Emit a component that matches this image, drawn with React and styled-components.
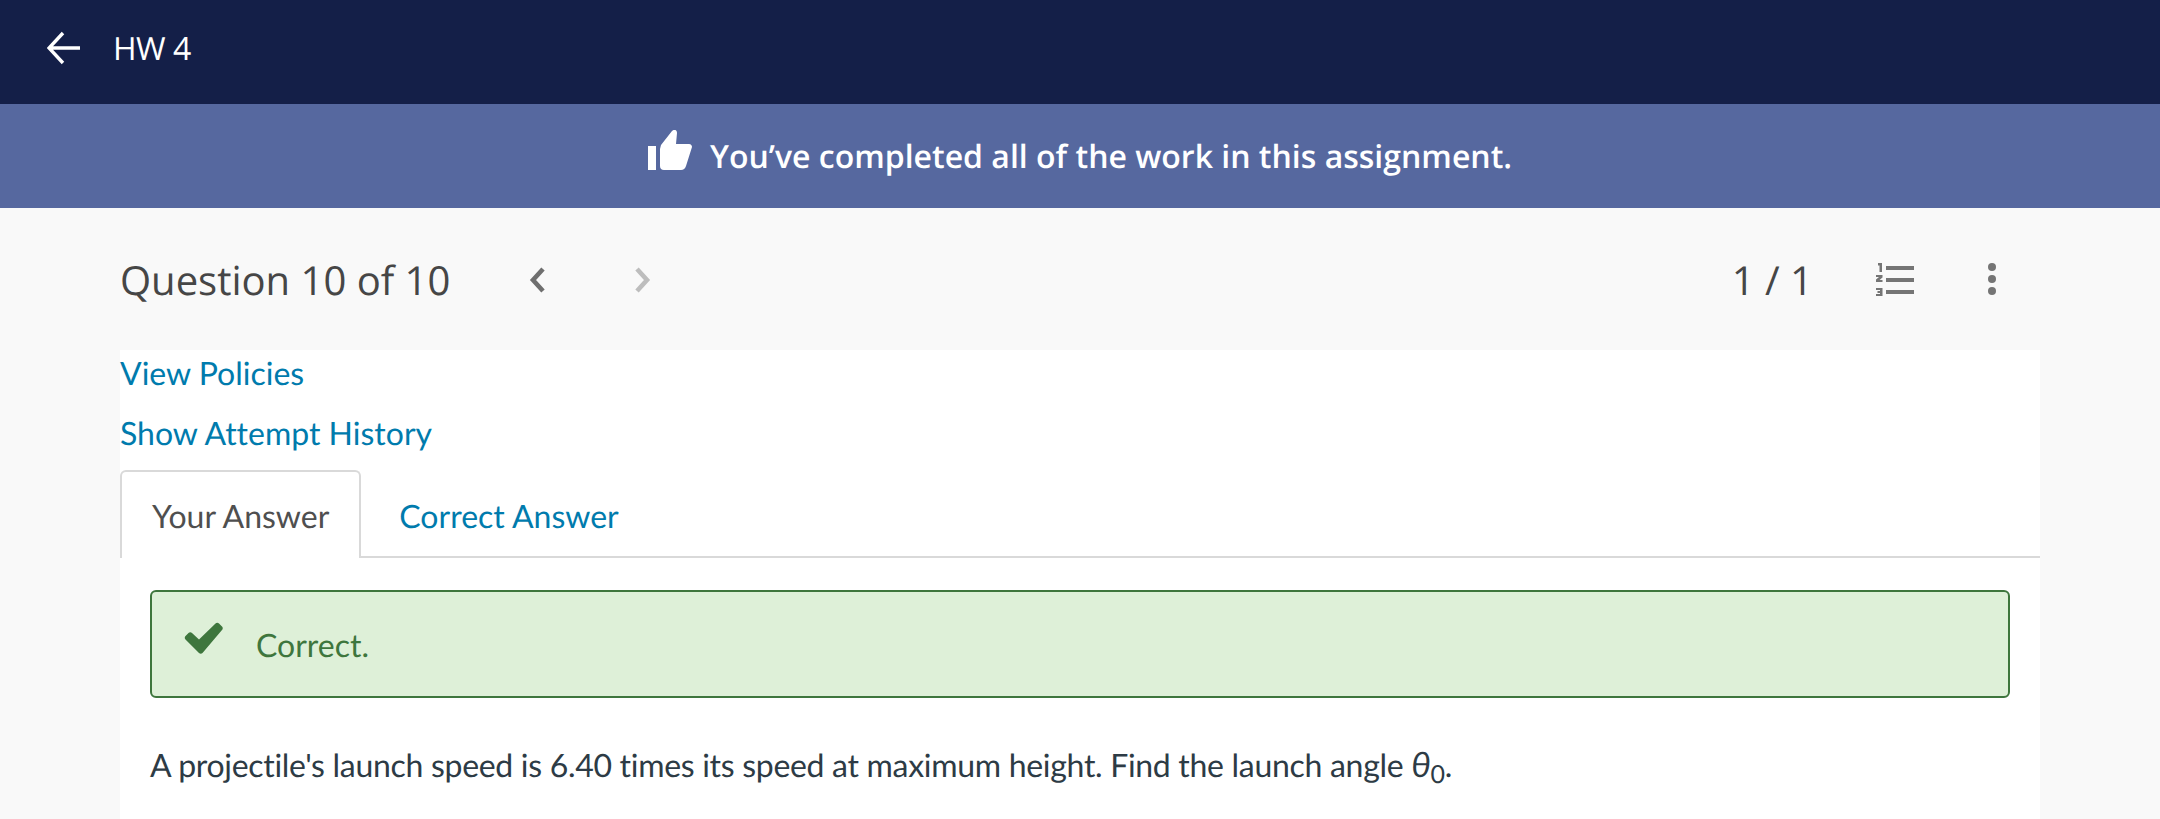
import React from 'react'
import styled, { createGlobalStyle } from 'styled-components'

const Global = createGlobalStyle`
  html, body { margin: 0; padding: 0; background: #f9f9f9; }
  body {
    height: 819px;
    overflow: hidden;
    font-family: "Lato", sans-serif;
    text-rendering: geometricPrecision;
    font-variant-ligatures: none;
  }
`

const TopBar = styled.header`
  height: 104px;
  box-sizing: border-box;
  padding: 0 0 8px 47px;
  background: #141f48;
  display: flex;
  align-items: center;
  color: #fff;
`
const BackIcon = styled.svg`
  width: 34px;
  height: 34px;
  margin-right: 32px;
`
const TopTitle = styled.div`
  font-family: "Open Sans", sans-serif;
  font-size: 32px;
  font-weight: 500;
  letter-spacing: -0.5px;
`
const Banner = styled.div`
  height: 104px;
  background: #56689f;
  display: flex;
  align-items: center;
  justify-content: center;
  color: #fff;
  font-family: "Open Sans", sans-serif;
  font-size: 32px;
  font-weight: 600;
`
const ThumbIcon = styled.svg`
  width: 44px;
  height: 40px;
  margin-right: 18px;
  margin-top: -12px;
`
const QuestionBar = styled.div`
  height: 142px;
  display: flex;
  align-items: center;
  padding: 0 164px 0 120px;
  font-family: "Open Sans", sans-serif;
  color: #464646;
`
const QuestionTitle = styled.div`
  font-size: 40px;
  width: 408px;
`
const Chevron = styled.svg`
  width: 22px;
  height: 28px;
  margin-top: 2px;
  margin-right: ${p => p.$gap || 0}px;
`
const Score = styled.div`
  margin-left: auto;
  font-size: 40px;
  margin-right: 63px;
`
const ListIcon = styled.svg`
  width: 38px;
  height: 33px;
  margin-right: 74px;
`
const DotsIcon = styled.svg`
  width: 8px;
  height: 32px;
`
const Card = styled.main`
  margin: 0 120px;
  background: #fff;
  height: 469px;
`
const LinkLine = styled.div`
  color: #007bad;
  font-size: 32px;
  line-height: 46px;
  height: 60px;
`
const Tabs = styled.div`
  display: flex;
  height: 86px;
  border-bottom: 2px solid #d9d9d9;
`
const Tab = styled.div`
  font-size: 32px;
  box-sizing: border-box;
  height: 88px;
  padding: 0 ${p => (p.$active ? 30 : 36)}px;
  display: flex;
  align-items: center;
  border: 2px solid ${p => (p.$active ? '#d9d9d9' : 'transparent')};
  border-bottom: none;
  border-radius: 6px 6px 0 0;
  background: ${p => (p.$active ? '#fff' : 'transparent')};
  color: ${p => (p.$active ? '#4f4f4f' : '#007bad')};
`
const Body = styled.div`
  padding: 32px 30px 0;
`
const Alert = styled.div`
  height: 108px;
  box-sizing: border-box;
  background: #def0d8;
  border: 2px solid #3e763d;
  border-radius: 6px;
  color: #3e763d;
  font-size: 32px;
  display: flex;
  align-items: center;
  padding-left: 32px;
`
const CheckIcon = styled.svg`
  width: 40px;
  height: 32px;
  margin-right: 32px;
  margin-top: -12px;
`
const Prompt = styled.p`
  margin: 42px 0 0;
  font-size: 32px;
  line-height: 48px;
  letter-spacing: -0.3px;
  color: #2d3b45;
`
const Theta = styled.i`
  font-size: 35px;
`
const Sub = styled.sub`
  font-size: 25px;
  line-height: 0;
  vertical-align: -6px;
`

export default function App() {
  return (
    <>
      <Global />
      <TopBar>
        <BackIcon viewBox="0 0 34 34" fill="none" stroke="#fff" strokeWidth="3.4">
          <path d="M33 17H3M16 2 2 17l14 15" />
        </BackIcon>
        <TopTitle>HW 4</TopTitle>
      </TopBar>
      <Banner>
        <ThumbIcon viewBox="0 0 44 40" fill="#fff">
          <rect x="0" y="16" width="8" height="24" />
          <path d="M12 19 13 15 24 1c2-2 5-1.500 5 2l-1 11h13c2 0 3 1.500 3 3l-6 19c-.8 2.500-2.500 4-5 4H16c-2.500 0-4-1.500-4-4z" />
        </ThumbIcon>
        You’ve completed all of the work in this assignment.
      </Banner>
      <QuestionBar>
        <QuestionTitle>Question 10 of 10</QuestionTitle>
        <Chevron viewBox="0 0 22 28" fill="none" stroke="#6f6f6f" strokeWidth="4.600" $gap="82">
          <path d="M15 3 5 14l10 11" />
        </Chevron>
        <Chevron viewBox="0 0 22 28" fill="none" stroke="#bdbdbd" strokeWidth="4.600">
          <path d="M5 3l10 11L5 25" />
        </Chevron>
        <Score>1 / 1</Score>
        <ListIcon viewBox="0 0 38 33" fill="#757575">
          <rect x="10" y="3" width="28" height="4" />
          <rect x="10" y="15" width="28" height="4" />
          <rect x="10" y="27" width="28" height="4" />
          <path d="M2 0h4v9H3.500V2.500H2zM0 12h6.500v2.500L3.500 17h3v2H0v-2.500L3 14H0zM0 25h6.500v8H0v-2h4v-1H1.500v-2H4v-1H0z" />
        </ListIcon>
        <DotsIcon viewBox="0 0 8 32" fill="#757575">
          <circle cx="4" cy="4" r="4" />
          <circle cx="4" cy="16" r="4" />
          <circle cx="4" cy="28" r="4" />
        </DotsIcon>
      </QuestionBar>
      <Card>
        <LinkLine>View Policies</LinkLine>
        <LinkLine>Show Attempt History</LinkLine>
        <Tabs>
          <Tab $active>Your Answer</Tab>
          <Tab>Correct Answer</Tab>
        </Tabs>
        <Body>
          <Alert>
            <CheckIcon viewBox="0 0 40 32" fill="#3e763d">
              <path d="M15 31 1.500 17.500c-1-1-1-2.500 0-3.500l3-3c1-1 2.500-1 3.500 0L15 17.500 31.500 1.500c1-1 2.500-1 3.500 0l3 3c1 1 1 2.500 0 3.500L18.500 31c-1 1-2.500 1-3.500 0z" />
            </CheckIcon>
            Correct.
          </Alert>
          <Prompt>
            A projectile's launch speed is 6.40 times its speed at maximum height. Find the launch angle <Theta>θ</Theta><Sub>0</Sub>.
          </Prompt>
        </Body>
      </Card>
    </>
  )
}
